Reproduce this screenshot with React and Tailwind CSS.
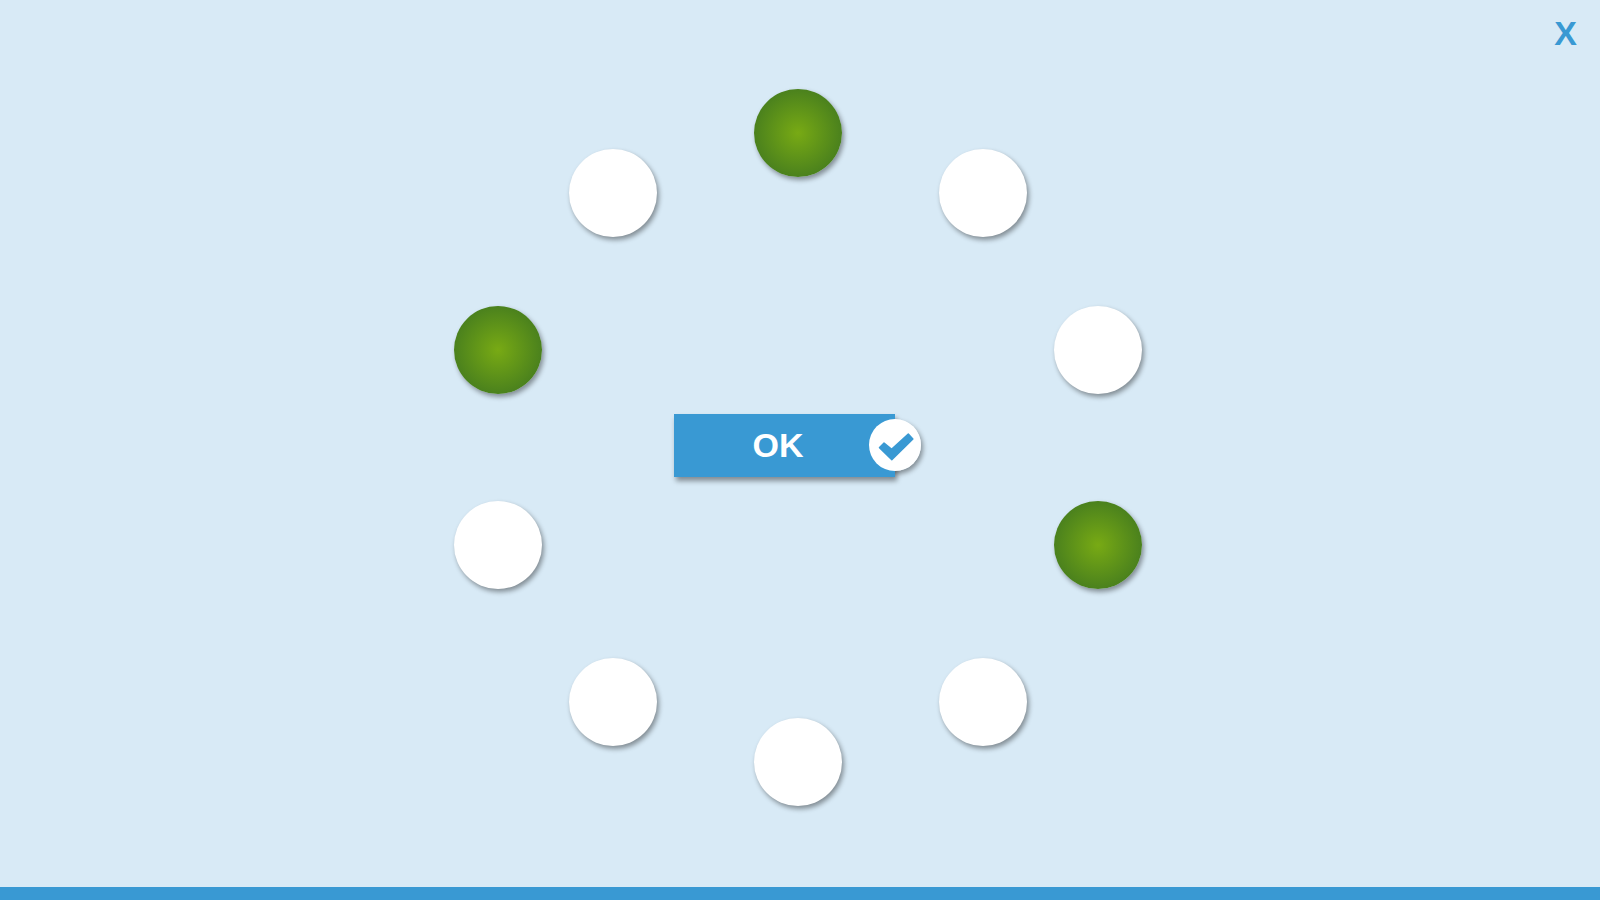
import React, { useState } from "react";

const TOTAL = 10;
const RADIUS = 43.87; // % of the ring's side

// Dots run clockwise, starting at the top
const dots = Array.from({ length: TOTAL }, (_, i) => {
  const angle = (i * 2 * Math.PI) / TOTAL;
  return {
    id: i,
    left: `${50 + RADIUS * Math.sin(angle)}%`,
    top: `${50 - RADIUS * Math.cos(angle)}%`,
  };
});

function Dot({ dot, active, onToggle }) {
  return (
    <button
      type="button"
      aria-label={`Position ${dot.id + 1}`}
      aria-pressed={active}
      onClick={() => onToggle(dot.id)}
      className={`absolute size-[88px] -translate-x-1/2 -translate-y-1/2 rounded-full cursor-pointer shadow-[2px_3px_5px_rgba(0,0,0,0.4)] ${
        active
          ? "bg-[radial-gradient(circle_closest-side,#78aa14,#467d1e_110%)]"
          : "bg-white"
      }`}
      style={{ left: dot.left, top: dot.top }}
    />
  );
}

function OkButton() {
  return (
    <button
      type="button"
      className="relative mr-7 mb-1 flex h-[63px] w-[221px] items-center justify-center bg-[#3999d3] pr-3 pb-0.5 text-[34px] leading-none font-bold text-white cursor-pointer shadow-[2px_4px_5px_rgba(0,0,0,0.4)]"
    >
      OK
      <span className="absolute top-[5px] -right-[26px] flex size-[52px] items-center justify-center rounded-full bg-white">
        <svg width="52" height="52" viewBox="0 0 52 52" fill="#3999d3" aria-hidden="true">
          <path d="M10 28.1 L14.5 23.6 Q15 23.1 15.5 23.6 L22.6 29.3 L38.8 14.4 Q39.3 13.9 39.8 14.4 L44.4 19.4 Q44.9 20 44.4 20.5 L23.3 41.3 Q22.8 41.8 22.3 41.3 L10 29.3 Q9.4 28.7 10 28.1 Z" />
        </svg>
        {/* Shadow falls outside the button only */}
        <span className="absolute inset-0 -z-10 rounded-full shadow-[2px_3px_5px_rgba(0,0,0,0.4)]" />
      </span>
    </button>
  );
}

export default function App() {
  const [selected, setSelected] = useState([0, 3, 8]);

  const toggle = (id) =>
    setSelected((prev) =>
      prev.includes(id) ? prev.filter((n) => n !== id) : [...prev, id]
    );

  return (
    <div className="relative isolate flex min-h-screen flex-col bg-[#d8eaf6] font-['Liberation_Sans',Arial,sans-serif]">
      <button
        type="button"
        aria-label="Close"
        className="absolute top-[15px] right-5 pl-1 pr-[3px] text-[34px] leading-9 font-bold text-[#3999d3] cursor-pointer"
      >
        X
      </button>

      <main className="flex flex-1 items-center justify-center pt-2 pr-1">
        {/* Ring of dots with the confirm button in the middle */}
        <div className="relative flex aspect-square w-[718px] max-w-full items-center justify-center">
          {dots.map((dot) => (
            <Dot
              key={dot.id}
              dot={dot}
              active={selected.includes(dot.id)}
              onToggle={toggle}
            />
          ))}
          <OkButton />
        </div>
      </main>

      <footer className="h-[13px] bg-[#3999d3]" />
    </div>
  );
}
